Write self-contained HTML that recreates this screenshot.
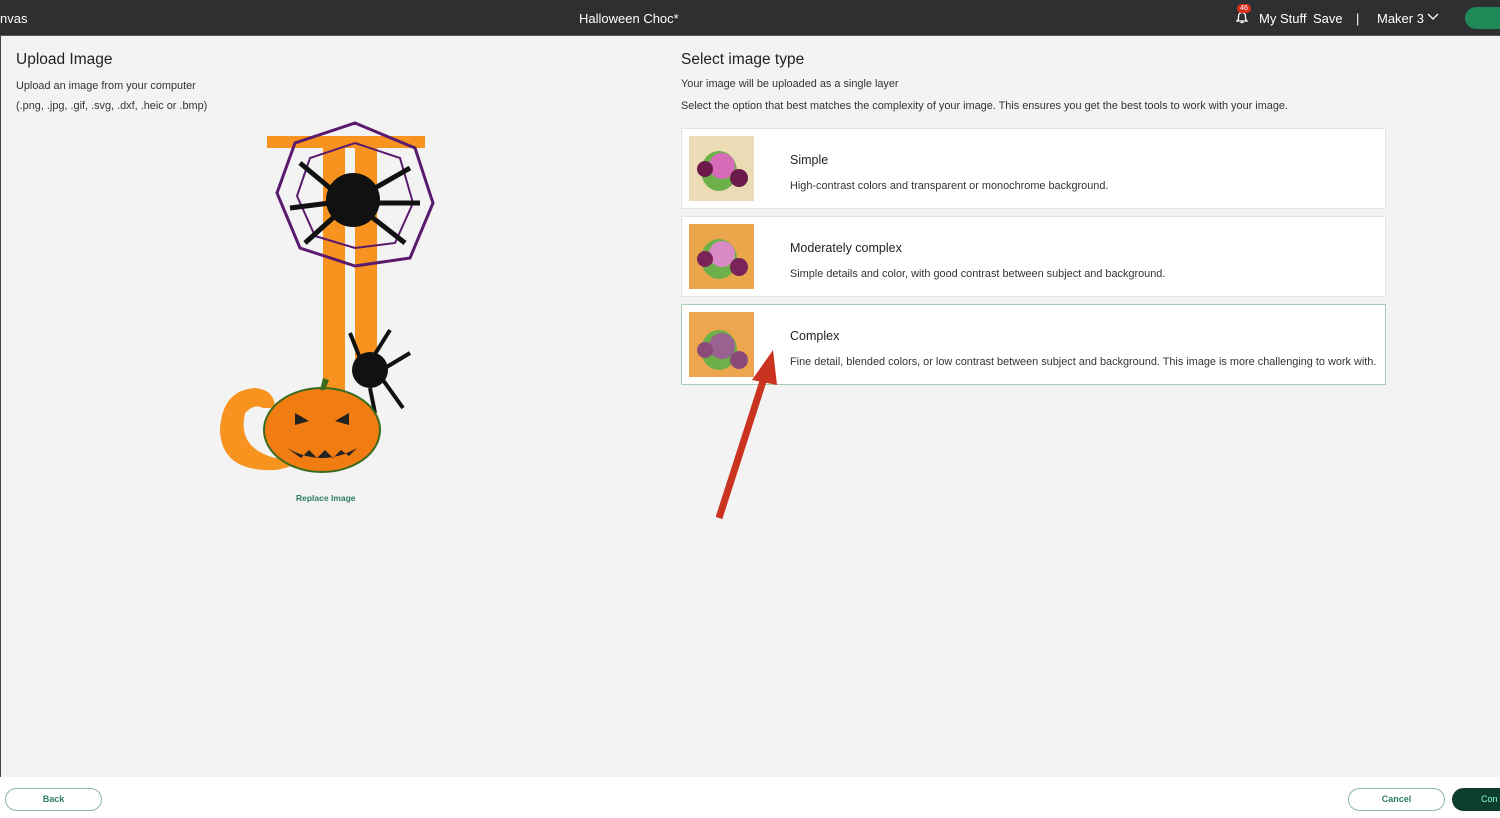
<!DOCTYPE html>
<html><head><meta charset="utf-8"><style>
*{margin:0;padding:0;box-sizing:border-box}
body{width:1500px;height:818px;overflow:hidden;background:#f3f3f3;font-family:"Liberation Sans",sans-serif;color:#222;position:relative}
.hdr{position:absolute;left:0;top:0;width:1500px;height:36px;background:#2d2f31;color:#fff;font-size:13px;border-bottom:1px solid #555}
.hdr span{position:absolute;top:11px}
.t{position:absolute;white-space:nowrap}
.card{position:absolute;left:681px;width:705px;height:81px;background:#fff;border:1px solid #e4e4e4}
.card .th{position:absolute;left:7px;top:7px;width:65px;height:65px}
.card .a{position:absolute;left:108px;top:24px;font-size:12.5px}
.card .b{position:absolute;left:108px;top:51px;font-size:10.9px;color:#333}
.ftr{position:absolute;left:0;top:777px;width:1500px;height:41px;background:#fff}
.btn{position:absolute;top:788px;height:23px;border:1.5px solid #8bb8a8;border-radius:12px;font-size:9px;font-weight:bold;color:#2e7d5e;text-align:center;line-height:20px;background:#fff}
</style></head><body>
<div class="hdr">
<span style="left:0">nvas</span>
<span style="left:579px">Halloween Choc*</span>
<svg style="position:absolute;left:1234px;top:9px" width="16" height="16" viewBox="0 0 16 16"><path d="M3 12h10l-1.5-2V7a3.5 3.5 0 0 0-7 0v3z M6.5 13.5h3" stroke="#fff" stroke-width="1.3" fill="none"/></svg>
<div style="position:absolute;left:1237px;top:4px;width:14px;height:9px;border-radius:5px;background:#d8321f;font-size:7px;text-align:center;line-height:9px">46</div>
<span style="left:1259px">My Stuff</span><span style="left:1313px">Save</span>
<span style="left:1356px">|</span><span style="left:1377px">Maker 3</span>
<svg style="position:absolute;left:1427px;top:13px" width="12" height="8"><path d="M1 1l5 5 5-5" stroke="#fff" stroke-width="1.3" fill="none"/></svg>
<div style="position:absolute;left:1465px;top:7px;width:50px;height:22px;border-radius:11px;background:#1f8a57"></div>
</div>
<div style="position:absolute;left:0;top:36px;width:1px;height:782px;background:#444"></div>
<div class="t" style="left:16px;top:51px;font-size:15.5px">Upload Image</div>
<div class="t" style="left:16px;top:80px;font-size:10.9px;color:#333">Upload an image from your computer</div>
<div class="t" style="left:16px;top:100px;font-size:10.9px;color:#333">(.png, .jpg, .gif, .svg, .dxf, .heic or .bmp)</div>
<svg style="position:absolute;left:215px;top:118px" width="225" height="360" viewBox="0 0 225 360">
<rect x="52" y="18" width="158" height="12" fill="#f7931e"/>
<rect x="108" y="20" width="22" height="300" fill="#f7931e"/>
<rect x="140" y="20" width="22" height="240" fill="#f7931e"/>
<path d="M108 300 Q95 355 50 352 Q5 350 5 310 Q8 272 40 270 Q60 272 60 290 L48 290 Q40 285 30 295 Q22 330 60 340 Q95 340 108 300Z" fill="#f7931e"/>
<polygon points="140,5 200,30 218,85 195,140 140,148 85,130 62,75 80,25" fill="none" stroke="#5a1a6e" stroke-width="3"/>
<polygon points="140,25 185,40 198,85 180,125 140,130 100,118 82,78 95,40" fill="none" stroke="#5a1a6e" stroke-width="2"/>
<circle cx="138" cy="82" r="27" fill="#111"/>
<path d="M115 70L85 45M115 85L75 90M120 98L90 125M160 70L195 50M162 85L205 85M158 100L190 125" stroke="#111" stroke-width="5"/>
<circle cx="155" cy="252" r="18" fill="#111"/>
<path d="M145 240L135 215M160 236L175 212M170 250L195 235M168 262L188 290M155 270L160 295" stroke="#111" stroke-width="4"/>
<ellipse cx="107" cy="312" rx="58" ry="42" fill="#f07c12" stroke="#3a6b1e" stroke-width="2"/>
<path d="M105 272l3-12 6 2-4 10z" fill="#3a6b1e"/>
<path d="M80 295l14 8-14 4zM134 295l-14 8 14 4zM72 330Q107 350 142 330l-8 8-8-6-8 8-8-8-8 8-8-8-8 8z" fill="#222"/>
</svg>
<div class="t" style="left:296px;top:493px;font-size:8.5px;font-weight:bold;color:#2e7d5e">Replace Image</div>
<div class="t" style="left:681px;top:51px;font-size:15.5px">Select image type</div>
<div class="t" style="left:681px;top:78px;font-size:10.9px;color:#333">Your image will be uploaded as a single layer</div>
<div class="t" style="left:681px;top:100px;font-size:10.9px;color:#333">Select the option that best matches the complexity of your image. This ensures you get the best tools to work with your image.</div>
<div class="card" style="top:128px"><div class="th" style="background:#ecdcb6"><svg width="65" height="65"><ellipse cx="30" cy="35" rx="18" ry="20" fill="#6db04a"/><circle cx="33" cy="30" r="13" fill="#d86bb8"/><circle cx="16" cy="33" r="8" fill="#6b1a4a"/><circle cx="50" cy="42" r="9" fill="#6b1a4a"/></svg></div><div class="a">Simple</div><div class="b">High-contrast colors and transparent or monochrome background.</div></div>
<div class="card" style="top:216px"><div class="th" style="background:#eaa64a"><svg width="65" height="65"><ellipse cx="30" cy="35" rx="18" ry="20" fill="#6db04a"/><circle cx="33" cy="30" r="13" fill="#d98ac6"/><circle cx="16" cy="35" r="8" fill="#7a2358"/><circle cx="50" cy="43" r="9" fill="#7a2358"/></svg></div><div class="a">Moderately complex</div><div class="b">Simple details and color, with good contrast between subject and background.</div></div>
<div class="card" style="top:304px;border-color:#a9cdb4"><div class="th" style="background:#eea64e"><svg width="65" height="65"><ellipse cx="30" cy="38" rx="18" ry="20" fill="#6db04a"/><circle cx="33" cy="34" r="13" fill="#9a6290"/><circle cx="16" cy="38" r="8" fill="#8a4a7a"/><circle cx="50" cy="48" r="9" fill="#8a4a7a"/></svg></div><div class="a">Complex</div><div class="b">Fine detail, blended colors, or low contrast between subject and background. This image is more challenging to work with.</div></div>
<svg style="position:absolute;left:705px;top:345px" width="80" height="180"><path d="M14 173L60 30" stroke="#c9331f" stroke-width="7"/><polygon points="68,5 47,35 72,40" fill="#c9331f"/></svg>
<div class="ftr"></div>
<div class="btn" style="left:5px;width:97px">Back</div>
<div class="btn" style="left:1348px;width:97px">Cancel</div>
<div style="position:absolute;left:1452px;top:788px;width:60px;height:23px;border-radius:12px;background:#0d3d2c;color:#8fc;font-size:9px;line-height:23px;padding-left:29px">Con</div>
</body></html>
